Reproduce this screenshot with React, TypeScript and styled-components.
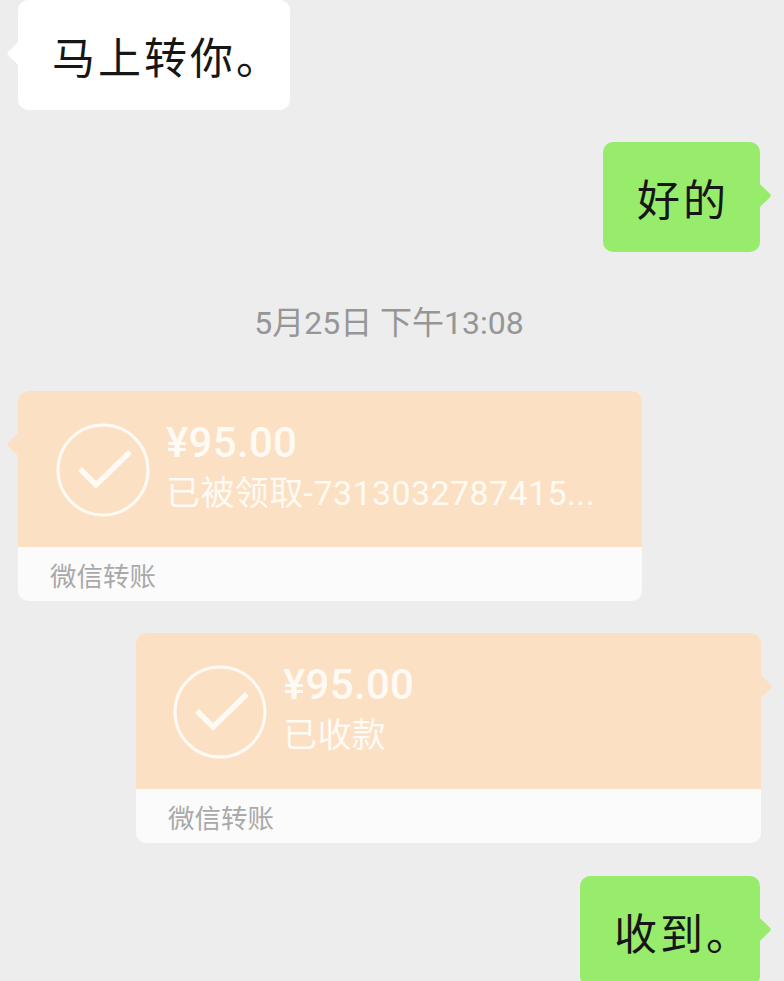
import styled, { createGlobalStyle } from "styled-components";

const GlobalStyle = createGlobalStyle`
  html, body {
    margin: 0;
    padding: 0;
    height: 100%;
    overflow: hidden;
    background: #ededed;
  }
`;

const Chat = styled.div`
  width: 784px;
  height: 981px;
  box-sizing: border-box;
  overflow: hidden;
  padding: 0 24px 0 18px;
  display: flex;
  flex-direction: column;
  font-family: Roboto, "Noto Sans CJK SC", sans-serif;
`;

const Row = styled.div<{ $mine?: boolean; $gap?: number }>`
  display: flex;
  flex-shrink: 0;
  justify-content: ${(p) => (p.$mine ? "flex-end" : "flex-start")};
  margin-top: ${(p) => p.$gap ?? 32}px;
`;

// diamond poking out of the bubble edge
const Tail = styled.span<{ $mine?: boolean; $color: string }>`
  position: absolute;
  top: 45px;
  ${(p) => (p.$mine ? "right: -8px;" : "left: -8px;")}
  width: 17px;
  height: 17px;
  background: ${(p) => p.$color};
  border-radius: 2px;
  transform: rotate(45deg);
`;

const Bubble = styled.div<{ $mine?: boolean; $width: number }>`
  position: relative;
  width: ${(p) => p.$width}px;
  height: 110px;
  box-sizing: border-box;
  padding-left: 34px;
  display: flex;
  align-items: center;
  border-radius: 10px;
  background: ${(p) => (p.$mine ? "#98ec6c" : "#ffffff")};
  color: #161616;
  font-family: "Noto Sans CJK SC", sans-serif;
  font-size: 43px;
  letter-spacing: 3px;
  line-height: 50px;
  white-space: nowrap;
`;

const TimeStamp = styled.div`
  flex-shrink: 0;
  margin-top: 50px;
  height: 42px;
  line-height: 42px;
  text-align: center;
  color: #969696;
  font-size: 32px;
`;

const Card = styled.div<{ $mine?: boolean }>`
  position: relative;
  width: ${(p) => (p.$mine ? 625 : 624)}px;
  margin-right: ${(p) => (p.$mine ? -1 : 0)}px;
  height: 210px;
  display: flex;
  flex-direction: column;
  border-radius: 10px;
  background: #fbfbfb;
`;

const CardBody = styled.div<{ $mine?: boolean }>`
  height: 156px;
  flex-shrink: 0;
  box-sizing: border-box;
  padding: 32px 0 0 ${(p) => (p.$mine ? 37 : 38)}px;
  display: flex;
  gap: 16px;
  background: #fbe0c3;
  border-radius: 10px 10px 0 0;
`;

const CheckIcon = styled.svg`
  width: 94px;
  height: 94px;
  flex-shrink: 0;
  fill: none;
  stroke: #fffaf4;
`;

const CardText = styled.div`
  min-width: 0;
  display: flex;
  flex-direction: column;
  color: #fffaf4;
`;

const Amount = styled.div`
  margin-top: -3px;
  height: 46px;
  line-height: 46px;
  font-size: 42px;
  font-weight: 500;
  letter-spacing: 0.3px;
`;

const Note = styled.div`
  margin-top: 5px;
  height: 44px;
  line-height: 44px;
  font-size: 34px;
  letter-spacing: 0.4px;
  white-space: nowrap;
`;

const CardFooter = styled.div`
  flex: 1;
  padding-left: 32px;
  line-height: 56px;
  font-size: 26.5px;
  color: #a9a9a9;
  font-family: "Noto Sans CJK SC", sans-serif;
`;

function Transfer({ mine, note }: { mine?: boolean; note: string }) {
  return (
    <Card $mine={mine}>
      <Tail $mine={mine} $color="#fbe0c3" />
      <CardBody $mine={mine}>
        <CheckIcon viewBox="0 0 94 94">
          <circle cx="47" cy="47" r="45" strokeWidth="3" />
          <path d="M24 46 L40 62 L74 29" strokeWidth="5.5" />
        </CheckIcon>
        <CardText>
          <Amount>¥95.00</Amount>
          <Note>{note}</Note>
        </CardText>
      </CardBody>
      <CardFooter>微信转账</CardFooter>
    </Card>
  );
}

export default function App() {
  return (
    <>
      <GlobalStyle />
      <Chat>
        <Row $gap={0}>
          <Bubble $width={272}>
            <Tail $color="#ffffff" />
            马上转你。
          </Bubble>
        </Row>
        <Row $mine>
          <Bubble $mine $width={157}>
            <Tail $mine $color="#98ec6c" />
            好的
          </Bubble>
        </Row>
        <TimeStamp>5月25日 下午13:08</TimeStamp>
        <Row $gap={47}>
          <Transfer note="已被领取-7313032787415..." />
        </Row>
        <Row $mine>
          <Transfer mine note="已收款" />
        </Row>
        <Row $mine $gap={33}>
          <Bubble $mine $width={180}>
            <Tail $mine $color="#98ec6c" />
            收到。
          </Bubble>
        </Row>
      </Chat>
    </>
  );
}
